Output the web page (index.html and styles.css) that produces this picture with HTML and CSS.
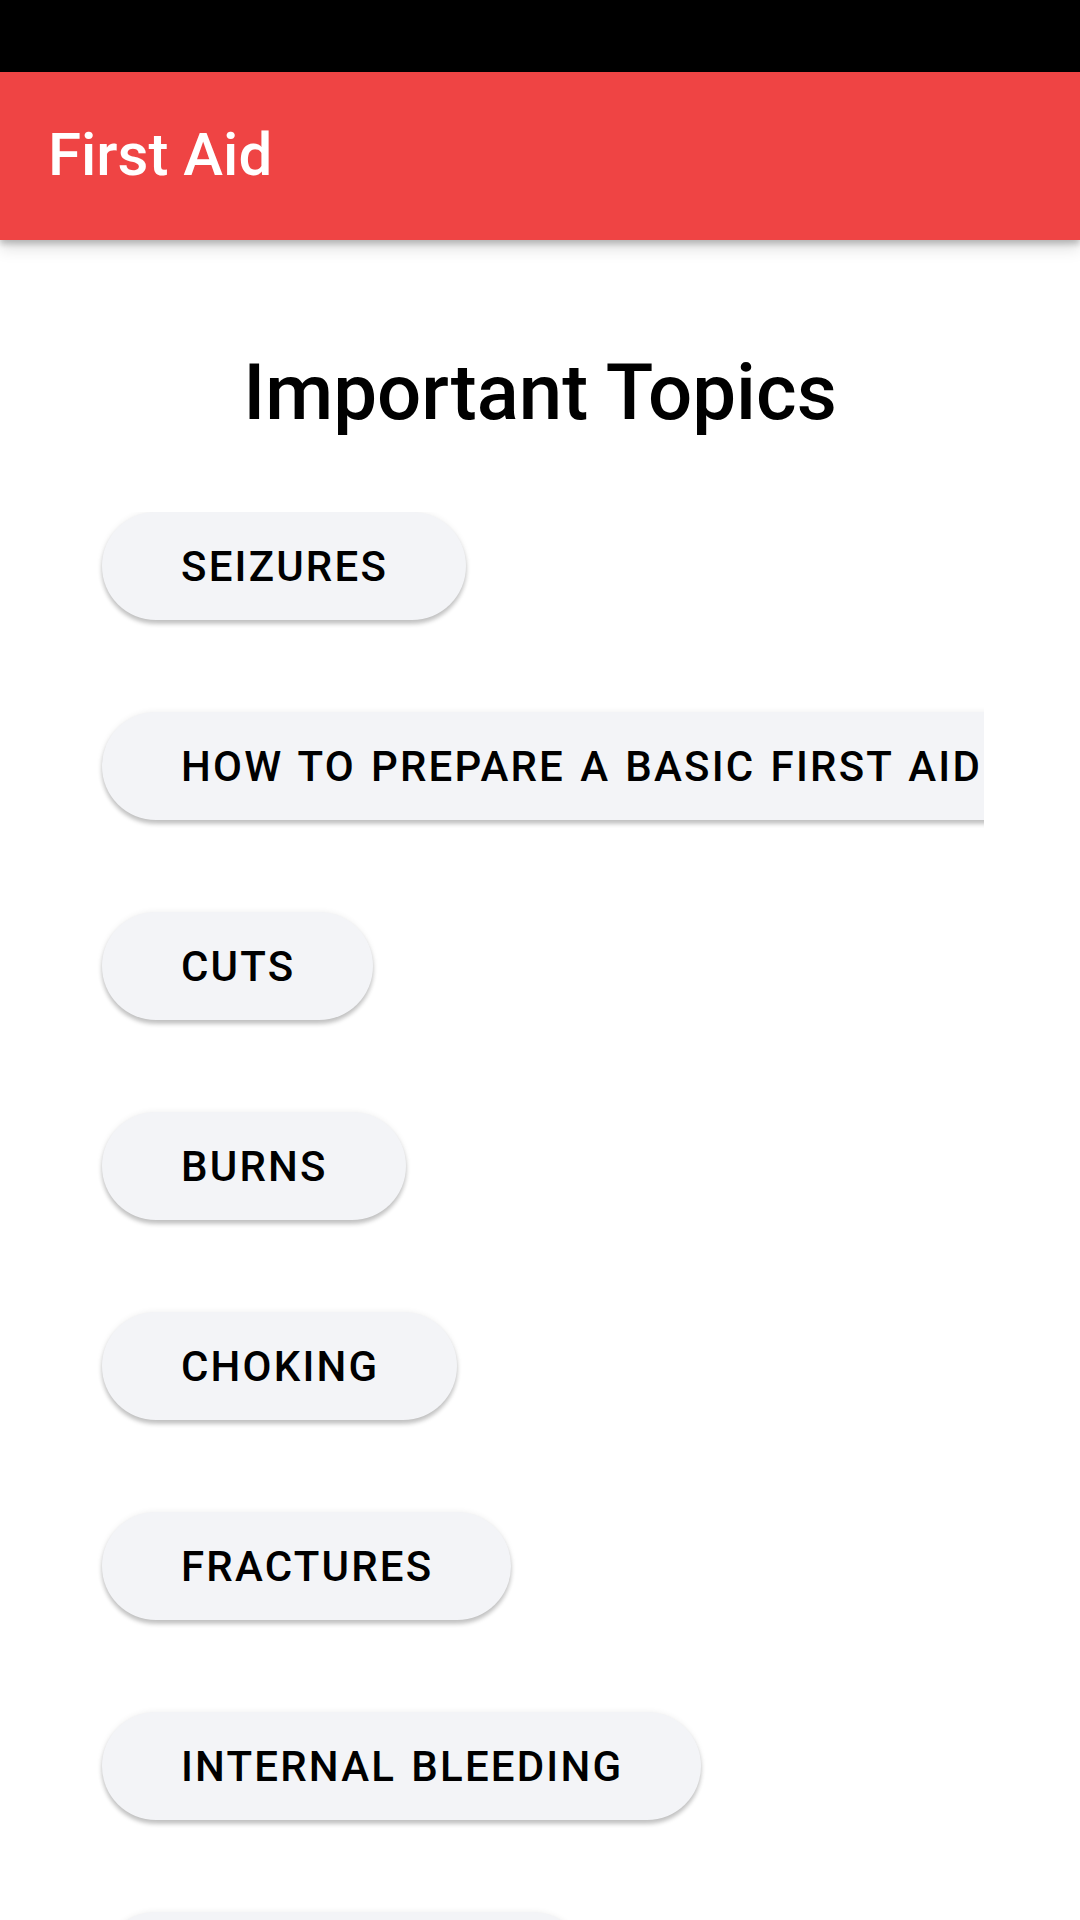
FILE: index.html
```html
<!DOCTYPE html>
<html>
<head>
<meta charset="utf-8">
<link rel="stylesheet" href="styles.css">
</head>
<body>
<div class="status-bar"></div>
<header class="app-bar"><span class="app-title">First Aid</span></header>
<main class="content">
  <h1 class="heading">Important Topics</h1>
  <div class="topic-list">
    <button class="topic">SEIZURES</button>
    <button class="topic">HOW TO PREPARE A BASIC FIRST AID KIT</button>
    <button class="topic">CUTS</button>
    <button class="topic">BURNS</button>
    <button class="topic">CHOKING</button>
    <button class="topic">FRACTURES</button>
    <button class="topic">INTERNAL BLEEDING</button>
    <button class="topic">HEART ATTACK</button>
  </div>
</main>
</body>
</html>
```
FILE: styles.css
```css
html, body {
  margin: 0;
  padding: 0;
  background: #ffffff;
  font-family: Roboto, "Noto Sans", sans-serif;
  width: 1080px;
  height: 1920px;
  overflow: hidden;
}
.status-bar {
  height: 72px;
  background: #000000;
}
.app-bar {
  position: relative;
  z-index: 2;
  height: 168px;
  background: #ef4444;
  display: flex;
  align-items: center;
  padding-left: 48px;
  box-shadow: 0 4px 6px rgba(0, 0, 0, 0.22), 0 10px 14px rgba(0, 0, 0, 0.10);
}
.app-title {
  color: #ffffff;
  font-size: 60px;
  font-weight: 500;
  line-height: 1;
  margin-top: -2px;
}
.content {
  display: flex;
  flex-direction: column;
}
.heading {
  margin: 107px 0 0 0;
  text-align: center;
  font-size: 78px;
  font-weight: 500;
  color: #000000;
  line-height: normal;
}
.topic-list {
  margin: 74px 0 0 96px;
  width: 888px;
  overflow: hidden;
  display: flex;
  flex-direction: column;
  align-items: flex-start;
  gap: 92px;
  padding-bottom: 20px;
}
.topic {
  flex: none;
  margin-left: 6px;
  height: 108px;
  padding: 0 78px 0 79px;
  border: none;
  border-radius: 54px;
  background: #f3f4f7;
  color: #000000;
  font-family: Roboto, "Noto Sans", sans-serif;
  font-size: 42px;
  font-weight: 500;
  letter-spacing: 2.2px;
  word-spacing: 2.5px;
  white-space: nowrap;
  box-shadow: 0 4px 4px rgba(0, 0, 0, 0.22), 0 0 6px rgba(0, 0, 0, 0.07);
}
```
